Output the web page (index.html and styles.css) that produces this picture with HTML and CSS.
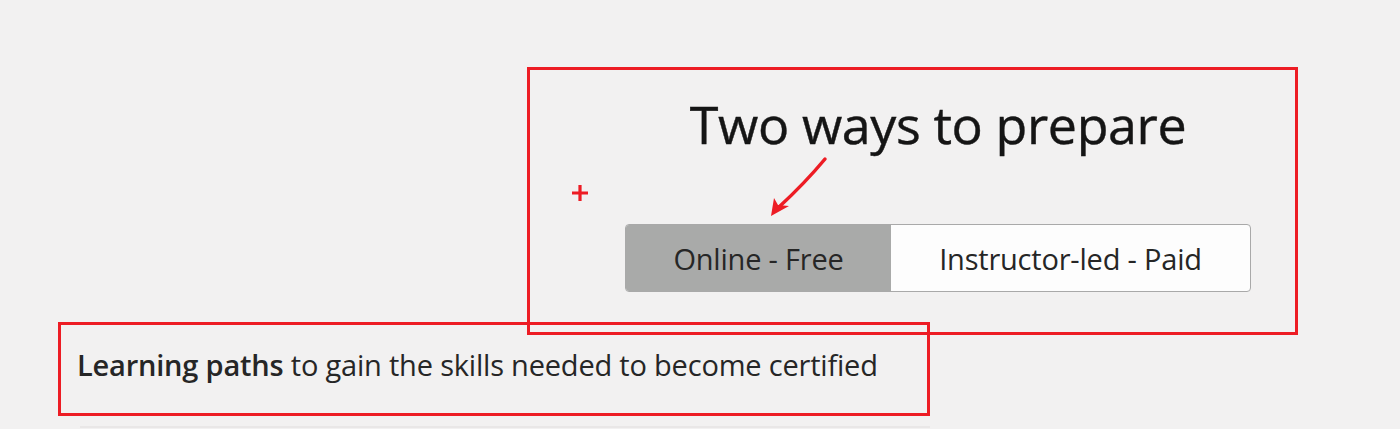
FILE: index.html
```html
<!DOCTYPE html>
<html lang="en">
<head>
<meta charset="utf-8">
<title>Two ways to prepare</title>
<link rel="stylesheet" href="styles.css">
</head>
<body>
<main class="page">
  <section class="prep-box">
    <h1 class="title">Two ways to prepare</h1>
    <div class="segmented" role="tablist">
      <button class="seg seg-active" role="tab" aria-selected="true">Online - Free</button>
      <button class="seg" role="tab" aria-selected="false">Instructor-led - Paid</button>
    </div>
  </section>
  <section class="paths-box">
    <p class="paths-text"><strong>Learning paths</strong> to gain the skills needed to become certified</p>
  </section>
  <div class="divider"></div>
</main>
<svg class="annot plus" width="20" height="20" viewBox="0 0 20 20" aria-hidden="true">
  <path d="M2 10 H18 M10 2 V18" stroke="#ed1c24" stroke-width="3.2" fill="none"/>
</svg>
<svg class="annot arrow" width="70" height="70" viewBox="0 0 70 70" aria-hidden="true">
  <path d="M56 4 C46 16 36 28 10 52" stroke="#ed1c24" stroke-width="3.5" fill="none" stroke-linecap="round"/>
  <path d="M2 61 L5 43 L9 50 L20 51 Z" fill="#ed1c24"/>
</svg>
</body>
</html>
```
FILE: styles.css
```css
* { box-sizing: border-box; }
html, body {
  margin: 0;
  padding: 0;
  background: #f2f1f1;
}
body {
  font-family: "Open Sans", "Noto Sans", sans-serif;
  color: #1e1e1e;
  width: 1400px;
  height: 429px;
  overflow: hidden;
  position: relative;
}
.page {
  padding-top: 67px;
  display: flex;
  flex-direction: column;
}
.prep-box {
  margin-left: 527px;
  width: 771px;
  height: 268px;
  border: 3px solid #ed1c24;
  display: flex;
  flex-direction: column;
  align-items: center;
  padding-left: 51px;
  padding-top: 19px;
}
.title {
  margin: 0;
  font-size: 52px;
  font-weight: 400;
  line-height: 70px;
  color: #151515;
  letter-spacing: -0.4px;
  -webkit-text-stroke: 0.4px #151515;
}
.segmented {
  margin-top: 65px;
  display: flex;
  width: 626px;
  height: 68px;
  border: 1px solid #a9a9a9;
  border-radius: 4px;
  overflow: hidden;
  background: #fdfdfd;
}
.seg {
  border: 0;
  margin: 0;
  padding: 0;
  font-family: "Open Sans", "Noto Sans", sans-serif;
  font-size: 29px;
  color: #262626;
  background: transparent;
  display: flex;
  align-items: center;
  justify-content: center;
  letter-spacing: -0.2px;
}
.seg-active {
  width: 265px;
  background: #a9aaa9;
}
.seg:not(.seg-active) { flex: 1; }
.paths-box {
  margin-top: -13px;
  margin-left: 58px;
  width: 872px;
  height: 94px;
  border: 3px solid #ed1c24;
  padding-left: 16px;
  padding-top: 22px;
}
.paths-text {
  margin: 0;
  font-size: 29px;
  line-height: 36px;
  color: #262626;
  letter-spacing: -0.2px;
}
.paths-text strong { font-weight: 600; }
.divider {
  margin-top: 10px;
  margin-left: 80px;
  width: 850px;
  height: 2px;
  background: #e9e7e7;
}
.annot { position: absolute; }
.plus { left: 570px; top: 183px; }
.arrow { left: 769px; top: 155px; }
```
